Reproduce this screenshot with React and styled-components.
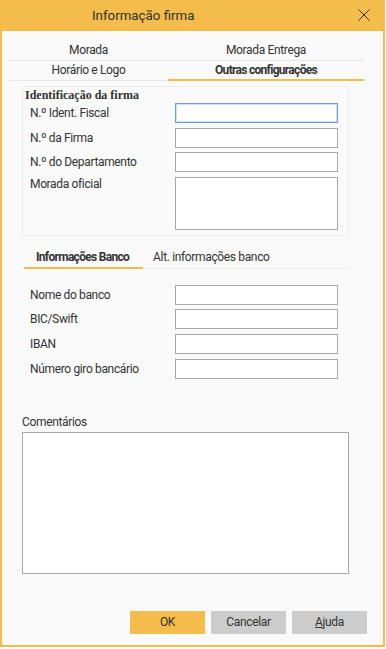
import styled, { createGlobalStyle } from "styled-components";

const GlobalStyle = createGlobalStyle`
  html, body {
    margin: 0;
    padding: 0;
    background: #ffffff;
  }
  body {
    font-family: Roboto, "Liberation Sans", sans-serif;
    font-size: 12px;
    letter-spacing: -0.35px;
    color: #333333;
  }
  * { box-sizing: border-box; }
`;

const ORANGE = "#f4bc4a";

const Dialog = styled.div`
  width: 385px;
  height: 647px;
  border: 2px solid ${ORANGE};
  border-top: none;
  background: #fafafa;
  display: flex;
  flex-direction: column;
`;

const TitleBar = styled.div`
  height: 31px;
  margin: 0 -2px;
  background: ${ORANGE};
  display: flex;
  align-items: center;
  padding-left: 92px;
  position: relative;
`;

const Title = styled.div`
  font-size: 13.3px;
  letter-spacing: 0;
  color: #333;
`;

const Close = styled.svg`
  position: absolute;
  right: 15px;
  top: 9px;
`;

const TabGrid = styled.div`
  display: grid;
  grid-template-columns: 159px 196px;
  margin: 10px 0 0 7px;
  width: 358px;
`;

const TabCell = styled.div`
  height: 20px;
  line-height: 19px;
  text-align: center;
  font-weight: ${(p) => (p.$active ? 700 : 400)};
  letter-spacing: ${(p) => (p.$active ? "-0.7px" : "-0.35px")};
  border-bottom: ${(p) => (p.$active ? `2px solid ${ORANGE}` : "1px solid #e6e6e6")};
  ${(p) => p.$active && "line-height: 18px;"}
`;

const Group = styled.div`
  margin: 5px 0 0 20px;
  width: 327px;
  border: 1px solid #ececec;
  padding: 1px 10px 5px 2px;
`;

const GroupTitle = styled.div`
  font-family: "Liberation Serif", serif;
  font-weight: 700;
  font-size: 12px;
  letter-spacing: 0;
  line-height: 14px;
  margin-bottom: 1px;
`;

const Rows = styled.div`
  display: flex;
  flex-direction: column;
  gap: 4.6px;
  padding-left: ${(p) => p.$indent}px;
`;

const Row = styled.div`
  display: flex;
  align-items: flex-start;
`;

const Label = styled.div`
  width: 145px;
  line-height: ${(p) => p.$lh || 20}px;
`;

const Input = styled.div`
  width: 163px;
  height: ${(p) => p.$h || 20}px;
  background: #fff;
  border: 1px solid ${(p) => (p.$focus ? "#6a9ee0" : "#a8a8a8")};
  ${(p) => p.$focus && "box-shadow: inset 0 0 0 1px #cfe0f5;"}
`;

const SubTabs = styled.div`
  display: flex;
  margin: 11px 0 0 22px;
  width: 325px;
  border-bottom: 1px solid #ececec;
`;

const SubTab = styled.div`
  height: 22px;
  line-height: 20px;
  padding: ${(p) => (p.$active ? "0 14px 0 12px" : "0 10px")};
  font-weight: ${(p) => (p.$active ? 700 : 400)};
  letter-spacing: ${(p) => (p.$active ? "-0.7px" : "-0.35px")};
  margin-bottom: -1px;
  border-bottom: 2px solid ${(p) => (p.$active ? ORANGE : "transparent")};
`;

const BankRows = styled(Rows)`
  margin: 16px 0 0 28px;
`;

const CommentLabel = styled.div`
  margin: 36px 0 0 20px;
  line-height: 14px;
`;

const Comment = styled.div`
  margin: 3px 0 0 20px;
  width: 327px;
  height: 142px;
  background: #fff;
  border: 1px solid #a8a8a8;
`;

const Buttons = styled.div`
  margin-top: auto;
  margin-bottom: 11px;
  display: flex;
  justify-content: flex-end;
  gap: 6px;
  padding-right: 16px;
`;

const Button = styled.div`
  width: 75px;
  height: 23px;
  line-height: 23px;
  text-align: center;
  background: ${(p) => (p.$primary ? ORANGE : "#cccccc")};
  color: #333;
  u { text-decoration: underline; }
`;

export default function App() {
  return (
    <>
      <GlobalStyle />
      <Dialog>
        <TitleBar>
          <Title>Informação firma</Title>
          <Close width="12" height="12" viewBox="0 0 12 12">
            <path d="M0.5 0.5 L11.5 11.5 M11.5 0.5 L0.5 11.5" stroke="#333" strokeWidth="1" />
          </Close>
        </TitleBar>

        <TabGrid>
          <TabCell>Morada</TabCell>
          <TabCell>Morada Entrega</TabCell>
          <TabCell>Horário e Logo</TabCell>
          <TabCell $active>Outras configurações</TabCell>
        </TabGrid>

        <Group>
          <GroupTitle>Identificação da firma</GroupTitle>
          <Rows $indent={5}>
            <Row>
              <Label>N.º Ident. Fiscal</Label>
              <Input $focus />
            </Row>
            <Row>
              <Label>N.º da Firma</Label>
              <Input />
            </Row>
            <Row>
              <Label>N.º do Departamento</Label>
              <Input />
            </Row>
            <Row>
              <Label $lh={14}>Morada oficial</Label>
              <Input $h={53} />
            </Row>
          </Rows>
        </Group>

        <SubTabs>
          <SubTab $active>Informações Banco</SubTab>
          <SubTab>Alt. informações banco</SubTab>
        </SubTabs>

        <BankRows $indent={0}>
          <Row>
            <Label>Nome do banco</Label>
            <Input />
          </Row>
          <Row>
            <Label>BIC/Swift</Label>
            <Input />
          </Row>
          <Row>
            <Label>IBAN</Label>
            <Input />
          </Row>
          <Row>
            <Label>Número giro bancário</Label>
            <Input />
          </Row>
        </BankRows>

        <CommentLabel>Comentários</CommentLabel>
        <Comment />

        <Buttons>
          <Button $primary>OK</Button>
          <Button>Cancelar</Button>
          <Button><u>A</u>juda</Button>
        </Buttons>
      </Dialog>
    </>
  );
}
